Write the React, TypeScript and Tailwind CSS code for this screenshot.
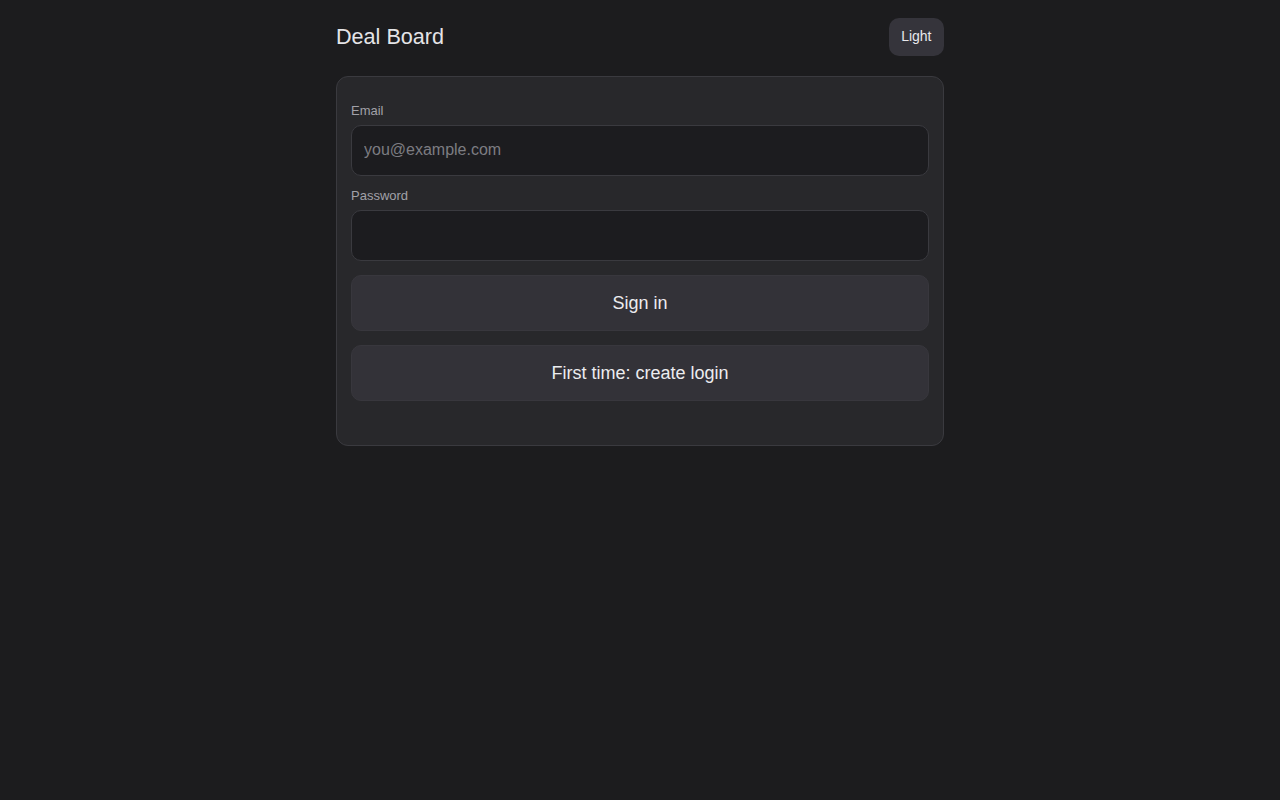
import { useState } from "react";

// Sign-in page for the deal board
export default function App() {
  const [email, setEmail] = useState("");
  const [password, setPassword] = useState("");

  return (
    <div
      className="min-h-screen w-full bg-[#1c1c1e] text-[#e6e6e8]"
      style={{ fontFamily: "'Liberation Sans', Arial, sans-serif" }}
    >
      <div className="mx-auto w-[608px] pt-[18px]">
        {/* Header */}
        <header className="flex h-[38px] items-center justify-between">
          <h1 className="text-[21.6px] font-normal text-[#e4e4e7]">
            Deal Board
          </h1>
          <button className="h-[38px] rounded-[10px] bg-[#35343b] px-[12.5px] pb-[1px] text-[14px] text-[#e8e8ec]">
            Light
          </button>
        </header>

        {/* Login card */}
        <div className="mt-[20px] rounded-[12px] border border-[#3a3a3f] bg-[#28282b] px-[14px] pb-[44px] pt-[25px]">
          <label className="block text-[13px] leading-[18px] text-[#a1a1a8]">
            Email
          </label>
          <input
            type="email"
            value={email}
            onChange={(e) => setEmail(e.target.value)}
            placeholder="you@example.com"
            className="mt-[5px] block h-[51px] w-full rounded-[10px] border border-[#3a3a3f] bg-[#1c1c1f] px-[12px] pb-[2px] text-[16px] text-[#e6e6e8] outline-none placeholder:text-[#7c7c82]"
          />

          <label className="mt-[11px] block text-[13px] leading-[18px] text-[#a1a1a8]">
            Password
          </label>
          <input
            type="password"
            value={password}
            onChange={(e) => setPassword(e.target.value)}
            className="mt-[5px] block h-[51px] w-full rounded-[10px] border border-[#3a3a3f] bg-[#1c1c1f] px-[12px] pb-[2px] text-[16px] text-[#e6e6e8] outline-none"
          />

          <button className="mt-[14px] block h-[56px] w-full rounded-[10px] border border-[#38373d] bg-[#333238] text-[18px] text-[#ececef]">
            Sign in
          </button>
          <button className="mt-[14px] block h-[56px] w-full rounded-[10px] border border-[#38373d] bg-[#333238] text-[18px] text-[#ececef]">
            First time: create login
          </button>
        </div>
      </div>
    </div>
  );
}
